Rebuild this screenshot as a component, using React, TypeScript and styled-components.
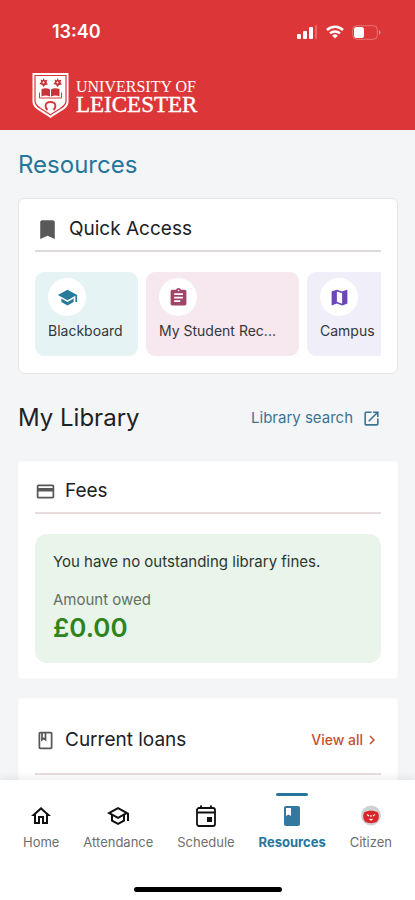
import React from "react";
import styled, { createGlobalStyle, css } from "styled-components";
import {
  MdAssignment,
  MdBookmark,
  MdChevronRight,
  MdClass,
  MdCreditCard,
  MdMap,
  MdOpenInNew,
  MdOutlineClass,
  MdOutlineHome,
  MdOutlineSchool,
  MdSchool,
} from "react-icons/md";

const GlobalStyle = createGlobalStyle`
  * { box-sizing: border-box; }
  body {
    margin: 0;
    background: #f3f5f7;
    color: #202124;
    font-family: Inter, Roboto, sans-serif;
  }
  h1, h2, h3, p { margin: 0; font-weight: 400; }
  button { border: 0; background: none; font: inherit; cursor: pointer; }
  a { text-decoration: none; }
`;

const Screen = styled.div`
  display: flex;
  flex-direction: column;
  height: 100vh;
`;

const Header = styled.header`
  flex: none;
  background: #dc3639;
  color: #fff;
  padding: 20px 32px 11px;
`;

const StatusBar = styled.div`
  display: flex;
  align-items: center;
  justify-content: space-between;
  height: 24px;
  padding: 0 2px 0 20px;
`;

const Clock = styled.time`
  font-size: 18px;
  line-height: 24px;
  font-weight: 600;
`;

const StatusIcons = styled.div`
  display: flex;
  align-items: center;
  gap: 8px;
`;

const Brand = styled.a`
  display: flex;
  align-items: center;
  gap: 7px;
  margin-top: 28px;
  color: #fff;
`;

const BrandName = styled.span`
  display: flex;
  flex-direction: column;
  font-family: "Liberation Serif", serif;
`;

const BrandKind = styled.span`
  font-size: 16px;
  line-height: 18px;
`;

const BrandPlace = styled.span`
  font-size: 23px;
  line-height: 18px;
  -webkit-text-stroke: 0.4px #fff;
`;

const Content = styled.main`
  flex: 1;
  min-height: 0;
  overflow-y: auto;
  scrollbar-width: none;
  padding: 21px 17px 20px 18px;
`;

const PageTitle = styled.h1`
  margin-bottom: 19px;
  font-size: 24px;
  line-height: 28px;
  color: #26769c;
`;

const SectionBar = styled.div`
  display: flex;
  align-items: center;
  justify-content: space-between;
  margin: 29px 0 28px;
  padding-right: 17px;
`;

const SectionTitle = styled.h2`
  font-size: 24px;
  line-height: 30px;
`;

const SearchLink = styled.a`
  display: flex;
  align-items: center;
  gap: 9px;
  font-size: 15px;
  line-height: 20px;
  color: #3b7493;
`;

const Card = styled.section<{ $outlined?: boolean }>`
  background: #fff;
  border: 1px solid ${(p) => (p.$outlined ? "#e3e5e7" : "#fafbfb")};
  border-radius: ${(p) => (p.$outlined ? "6px" : "3px")};
  padding: ${(p) => (p.$outlined ? "17px 16px" : "16px 16px 15px")};

  & + & { margin-top: 19px; }
`;

const CardHead = styled.div<{ $tall?: boolean; $line?: string }>`
  display: flex;
  align-items: center;
  justify-content: space-between;
  padding: ${(p) => (p.$tall ? "12px 0 20px" : "0 0 8px")};
  border-bottom: 2px solid ${(p) => p.$line ?? "#e9dcdd"};
`;

const CardTitle = styled.h3`
  display: flex;
  align-items: center;
  gap: 9px;
  font-size: 19px;
  line-height: 26px;

  svg { color: #58595b; }
`;

const ViewAll = styled.a`
  display: flex;
  align-items: center;
  font-size: 14px;
  line-height: 20px;
  font-weight: 500;
  color: #c4512f;
`;

const Shortcuts = styled.div`
  display: flex;
  gap: 8px;
  margin-top: 20px;
  overflow-x: auto;
  scrollbar-width: none;
`;

const Shortcut = styled.button<{ $tint: string; $ink: string; $wide?: boolean }>`
  display: flex;
  flex-direction: column;
  flex: none;
  align-items: flex-start;
  gap: 6px;
  width: ${(p) => (p.$wide ? "153px" : "103px")};
  height: 84px;
  padding: 6px 13px;
  border-radius: 9px;
  background: ${(p) => p.$tint};
  color: ${(p) => p.$ink};
`;

const ShortcutIcon = styled.span`
  display: grid;
  place-items: center;
  width: 38px;
  height: 38px;
  border-radius: 50%;
  background: #fff;
`;

const ShortcutLabel = styled.span`
  white-space: nowrap;
  font-size: 14px;
  line-height: 18px;
  color: #35363b;
`;

const FinePanel = styled.div`
  margin-top: 20px;
  padding: 18px 18px 17px;
  border-radius: 12px;
  background: #e9f4ea;
`;

const FineMessage = styled.p`
  font-size: 15px;
  line-height: 20px;
  color: #2d3730;
`;

const FineLabel = styled.p`
  margin-top: 18px;
  font-size: 15px;
  line-height: 20px;
  color: #647067;
`;

const FineAmount = styled.p`
  font-size: 26px;
  line-height: 36px;
  font-weight: 600;
  color: #2f8420;
`;

const BottomNav = styled.nav`
  flex: none;
  z-index: 1;
  background: #fff;
  box-shadow: 0 -2px 8px rgba(0, 0, 0, 0.08);
  padding: 13px 23px 8px;
`;

const Tabs = styled.div`
  display: flex;
  justify-content: space-between;
`;

const Tab = styled.a<{ $active?: boolean }>`
  display: flex;
  flex-direction: column;
  align-items: center;
  color: #6e6e70;
  font-size: 13px;
  line-height: 18px;

  &::before {
    content: "";
    width: 32px;
    height: 3px;
    margin-bottom: 8px;
    border-radius: 2px;
  }

  svg { color: #111; margin-bottom: 5px; }

  ${(p) =>
    p.$active &&
    css`
      color: #26769c;
      font-weight: 700;
      &::before { background: #26769c; }
      svg { color: #32789f; }
    `}
`;

const HomeIndicator = styled.div`
  width: 148px;
  height: 5px;
  margin: 36px auto 0;
  border-radius: 3px;
  background: #000;
`;

const Signal = () => (
  <svg width="21" height="14" viewBox="0 0 21 14" fill="#fff" aria-hidden="true">
    <rect x="0" y="9" width="4" height="5" rx="1" />
    <rect x="6" y="6" width="4" height="8" rx="1" />
    <rect x="12" y="2" width="4" height="12" rx="1" />
    <rect x="18" y="0" width="2" height="14" rx="1" opacity=".25" />
  </svg>
);

const Wifi = () => (
  <svg width="18" height="14" viewBox="0 0 18 14" fill="none" stroke="#fff" strokeWidth="2.5" aria-hidden="true">
    <path d="M1 5a11.5 11.5 0 0 1 16 0" />
    <path d="M4 8.4a7.2 7.2 0 0 1 10 0" />
    <path d="M9 13.6 6.2 10.7a4 4 0 0 1 5.6 0Z" fill="#fff" stroke="none" />
  </svg>
);

const Battery = () => (
  <svg width="29" height="15" viewBox="0 0 29 15" fill="none" aria-hidden="true">
    <rect x=".7" y=".7" width="24.6" height="13.6" rx="4" stroke="#fff" strokeOpacity=".3" />
    <rect x="2" y="2" width="10" height="11" rx="2.5" fill="#fff" />
    <path d="M27 5.3c2 .8 2 3.6 0 4.4Z" fill="#fff" fillOpacity=".45" />
  </svg>
);

const Crest = () => (
  <svg width="37" height="47" viewBox="0 0 37 47" aria-hidden="true">
    <path d="M.5 1h36v29c0 7-11 10.500-18 16C11.500 40.500.5 37 .5 30Z" fill="#fff" />
    <path d="M3 3.500h31v26c0 5.500-9 8.500-15.500 13.500C12 38 3 35 3 29.500Z" fill="none" stroke="#dc3639" strokeWidth="1.200" />
    <g fill="#c93439">
      <path d="m11.500 6 1.300 2.200 2.700-.5-1 2.600 1.500 2.300-2.700.3-1.800 2.200-1.500-2.300-2.700-.7 1.800-2-.5-2.500 2.300.7Z" />
      <path d="m25.500 6 1.300 2.200 2.700-.5-1 2.600 1.500 2.300-2.700.3-1.800 2.200-1.500-2.300-2.700-.7 1.800-2-.5-2.500 2.300.7Z" />
      <path d="M9.500 17c3-1.200 6-1.200 8.500.4v7c-3-1.200-6-1.200-8.500 0ZM19 17.400c2.500-1.600 5.500-1.600 8.500-.4v7.400c-2.500-1.200-5.500-1.200-8.500 0Z" />
      <path d="M7.500 20.500v5.500h22v-5.500" fill="none" stroke="#dc3639" />
    </g>
    <circle cx="11.500" cy="10.500" r="1" fill="#fff" />
    <circle cx="25.500" cy="10.500" r="1" fill="#fff" />
    <path d="M15.500 38c-3-3-2.800-8 3-8s6 5 3 8" fill="none" stroke="#dc3639" strokeWidth="1.800" />
  </svg>
);

const Calendar = () => (
  <svg width="24" height="24" viewBox="0 0 24 24" fill="none" aria-hidden="true">
    <rect x="3" y="4" width="18" height="18" rx="2" stroke="currentColor" strokeWidth="1.8" />
    <path d="M3 8.500h18M7 1.500V5M17 1.500V5" stroke="currentColor" strokeWidth="2" />
    <rect x="13" y="13" width="5" height="5" fill="currentColor" />
  </svg>
);

const CitizenFace = () => (
  <svg width="24" height="24" viewBox="-1 -1 24 24" aria-hidden="true">
    <circle cx="11" cy="10.500" r="10" fill="#cfd1d2" />
    <path d="M4 7.500c4-2.200 10-2.200 14 0 1.500 3.500 1 7-1.500 9.500-3.500 1.500-7.500 1.500-11 0C3 14.500 2.500 11 4 7.500Z" fill="#d7262c" />
    <path d="M7 9.500 9 11M15 9.500 13 11M9.500 14l1.500 1 1.500-1M11 10v2" stroke="#fff" strokeWidth="1.100" fill="none" />
  </svg>
);

export default function App() {
  return (
    <Screen>
      <GlobalStyle />
      <Header>
        <StatusBar>
          <Clock>13:40</Clock>
          <StatusIcons>
            <Signal />
            <Wifi />
            <Battery />
          </StatusIcons>
        </StatusBar>
        <Brand href="#home">
          <Crest />
          <BrandName>
            <BrandKind>UNIVERSITY OF</BrandKind>
            <BrandPlace>LEICESTER</BrandPlace>
          </BrandName>
        </Brand>
      </Header>

      <Content>
        <PageTitle>Resources</PageTitle>
        <Card $outlined>
          <CardHead $line="#dcd8db">
            <CardTitle>
              <MdBookmark size={25} />
              Quick Access
            </CardTitle>
          </CardHead>
          <Shortcuts>
            <Shortcut type="button" $tint="#e6f3f5" $ink="#267b9a">
              <ShortcutIcon><MdSchool size={21} /></ShortcutIcon>
              <ShortcutLabel>Blackboard</ShortcutLabel>
            </Shortcut>
            <Shortcut type="button" $tint="#f6e8ee" $ink="#a04468" $wide>
              <ShortcutIcon><MdAssignment size={21} /></ShortcutIcon>
              <ShortcutLabel>My Student Rec...</ShortcutLabel>
            </Shortcut>
            <Shortcut type="button" $tint="#f0eef9" $ink="#6b46b8">
              <ShortcutIcon><MdMap size={21} /></ShortcutIcon>
              <ShortcutLabel>Campus</ShortcutLabel>
            </Shortcut>
          </Shortcuts>
        </Card>

        <SectionBar>
          <SectionTitle>My Library</SectionTitle>
          <SearchLink href="#library-search">
            Library search
            <MdOpenInNew size={19} />
          </SearchLink>
        </SectionBar>

        <Card>
          <CardHead>
            <CardTitle>
              <MdCreditCard size={21} />
              Fees
            </CardTitle>
          </CardHead>
          <FinePanel>
            <FineMessage>You have no outstanding library fines.</FineMessage>
            <FineLabel>Amount owed</FineLabel>
            <FineAmount>£0.00</FineAmount>
          </FinePanel>
        </Card>

        <Card>
          <CardHead $tall>
            <CardTitle>
              <MdOutlineClass size={21} />
              Current loans
            </CardTitle>
            <ViewAll href="#loans">
              View all
              <MdChevronRight size={18} />
            </ViewAll>
          </CardHead>
        </Card>
      </Content>

      <BottomNav>
        <Tabs>
          <Tab href="#home"><MdOutlineHome size={24} />Home</Tab>
          <Tab href="#attendance"><MdOutlineSchool size={24} />Attendance</Tab>
          <Tab href="#schedule"><Calendar />Schedule</Tab>
          <Tab href="#resources" $active aria-current="page"><MdClass size={24} />Resources</Tab>
          <Tab href="#citizen"><CitizenFace />Citizen</Tab>
        </Tabs>
        <HomeIndicator />
      </BottomNav>
    </Screen>
  );
}
